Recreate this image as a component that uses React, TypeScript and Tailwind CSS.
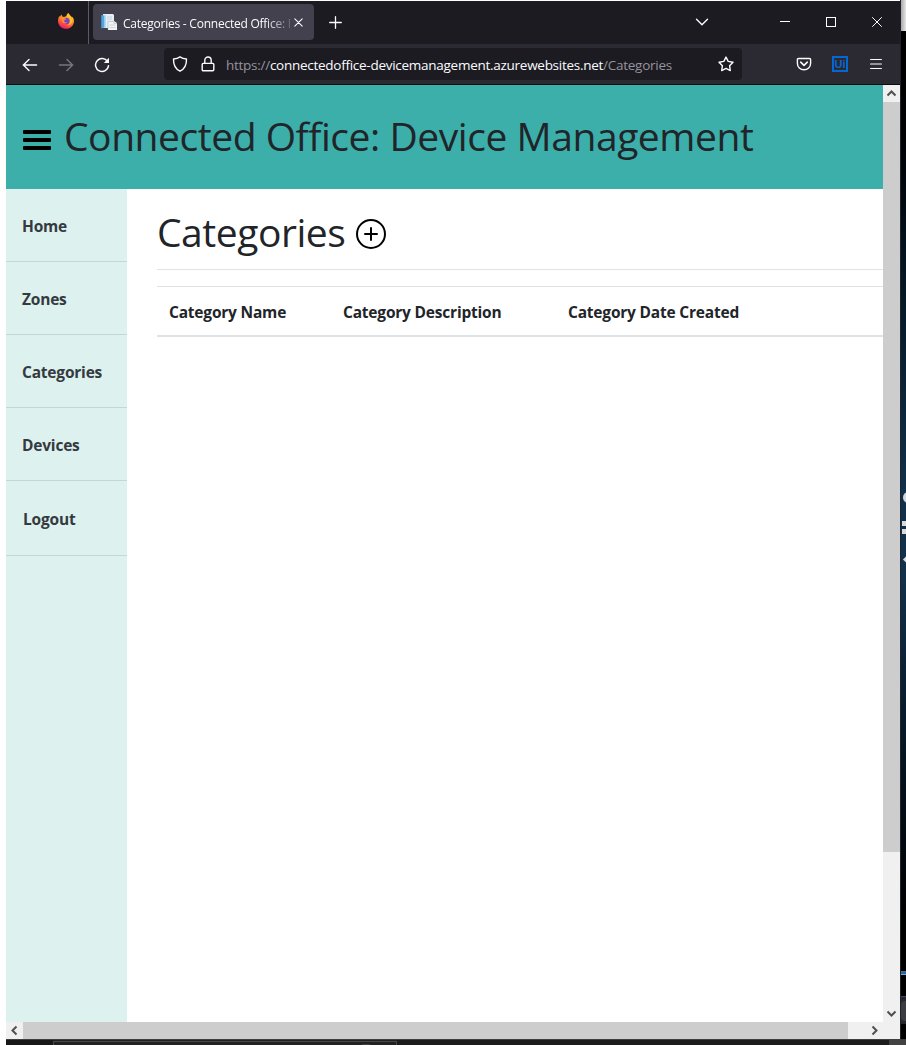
import type { ReactNode } from "react";

const navItems = [
  { label: "Home", box: "h-[73px] pt-[25px] pl-4" },
  { label: "Zones", box: "h-[73px] pt-[25px] pl-4" },
  { label: "Categories", box: "h-[73px] pt-[25px] pl-4" },
  { label: "Devices", box: "h-[73px] pt-[25px] pl-4" },
  { label: "Logout", box: "h-[75px] pt-[26px] pl-[17px]" },
];

function Icon({ className, size, children }: { className?: string; size: number; children: ReactNode }) {
  return (
    <svg
      className={`block shrink-0 ${className ?? ""}`}
      width={size}
      height={size}
      viewBox={`0 0 ${size} ${size}`}
      fill="none"
      stroke="currentColor"
      strokeWidth="1.4"
      strokeLinecap="round"
      strokeLinejoin="round"
    >
      {children}
    </svg>
  );
}

function FirefoxLogo() {
  return (
    <svg className="block" width="16" height="16" viewBox="0 0 16 16">
      <defs>
        <linearGradient id="flame" x1="0.8" y1="0" x2="0.3" y2="1">
          <stop offset="0" stopColor="#ffe226" />
          <stop offset="0.4" stopColor="#ff9a20" />
          <stop offset="0.75" stopColor="#ff4545" />
          <stop offset="1" stopColor="#e8157a" />
        </linearGradient>
      </defs>
      <path
        d="M15.4 5.6C15 4.6 14.2 3.7 13.5 3.3C13.9 4 14 4.7 14 4.8C13.2 2.9 11.4 1.9 10.3 0C9 0.8 8.5 2.2 8.4 3.2C7.5 3.2 6.7 3.6 6.2 4L4.6 3.7C4 3.3 3.8 2.2 3.8 1.6C2.9 2.1 2.4 2.9 2.1 3.4L1.3 3.5L1.2 2.9C0.4 4.5 0 6.3 0 8C0 12.3 3.5 15.8 8 15.8C12.4 15.8 16 12.4 16 8C16 7.2 15.8 6.3 15.4 5.6Z"
        fill="url(#flame)"
      />
      <circle cx="8.2" cy="8" r="3.3" fill="#7a41c8" />
      <path d="M3.8 5L7 5.3L8.3 6.1C7.5 7.1 6.3 7 6 7.9C6.3 9.2 7.5 9.8 9.3 9C8.6 10.8 5.7 10.9 4.4 9.2C3.7 8 3.4 6.3 3.8 5Z" fill="#ff8a2a" />
      <path d="M8.3 3.2C10.8 3.2 12.4 5.4 12.4 7.5C12.4 10 11 11.7 9 12.3C12.8 12.4 14.6 9.6 14 6.8C13.5 4.9 11.8 3.2 10.2 1.2C9.5 2 9.2 2.8 8.3 3.2Z" fill="#ffc42c" />
    </svg>
  );
}

function DocumentsIcon() {
  return (
    <svg className="block shrink-0" width="16" height="16" viewBox="0 0 16 16">
      <path d="M2 0H12L13 1V14H2Z" fill="#e6edf3" />
      <path d="M0.3 1L3.6 1.6V13.4L0.3 14.6Z" fill="#4ba6e2" />
      <path d="M3.6 1.6L5 1V14L3.6 13.4Z" fill="#b5d7ef" />
      <path d="M6 3H11M6 5H11" stroke="#c3d1de" />
      <path d="M7 7H13L16 9V16H7Z" fill="#f1f3f5" />
      <path d="M7 15V7.5H12.5L13 9.5H16" stroke="#a9b6c2" strokeWidth="0.6" fill="none" />
      <path d="M8.5 11H14.5M8.5 13.5H14.5" stroke="#cfd4d8" />
    </svg>
  );
}

function TabBar() {
  return (
    <div className="flex h-[43px] bg-[#1c1b22] text-[#fbfbfe]">
      <div className="flex w-[83px] border-r border-[#5b5b66] pt-3 pl-[52px]">
        <FirefoxLogo />
      </div>
      <div className="mt-[3px] ml-1 flex h-9 w-[221px] items-center rounded bg-[#42414d] pl-2">
        <DocumentsIcon />
        <div className="ml-[6px] w-[167px] overflow-hidden whitespace-nowrap [mask-image:linear-gradient(to_right,black_142px,transparent_174px)]">
          <span className="text-xs leading-5 tracking-[-0.24px]">Categories - Connected Office: Device Management</span>
        </div>
        <Icon size={9} className="ml-1">
          <path strokeWidth="1.1" d="M0.8 0.8L8.2 8.2M8.2 0.8L0.8 8.2" />
        </Icon>
      </div>
      <Icon size={13} className="mt-[15px] ml-[15px]">
        <path strokeWidth="1.3" d="M6.5 0.7V12.3M0.7 6.5H12.3" />
      </Icon>
      <div className="ml-auto flex">
        <Icon size={14} className="mt-[14px] mr-[71px]">
          <path d="M1.5 4.2L7 9.7L12.5 4.2" />
        </Icon>
        <div className="mt-5 mr-9 h-px w-[10px] bg-white" />
        <div className="mt-4 mr-9 size-[10px] border border-white" />
        <Icon size={10} className="mt-4 mr-[18px]">
          <path strokeWidth="1" d="M0.5 0.5L9.5 9.5M9.5 0.5L0.5 9.5" />
        </Icon>
      </div>
    </div>
  );
}

function Toolbar() {
  return (
    <div className="flex h-[41px] items-start border-b border-[#0c0c0d] bg-[#2b2a33] text-[#fbfbfe]">
      <Icon size={16} className="mt-[13px] ml-4">
        <path d="M1.2 8H14.6M7 2.6L1.4 8L7 13.4" />
      </Icon>
      <Icon size={16} className="mt-[13px] ml-5 text-[#77767e]">
        <path d="M14.8 8H1.4M9 2.6L14.6 8L9 13.4" />
      </Icon>
      <Icon size={16} className="mt-[13px] ml-5">
        <path strokeWidth="1.5" d="M13.6 4.6A6.5 6.5 0 1 0 14.5 8.8" />
        <path fill="currentColor" stroke="none" d="M15 0.8V6H9.8Z" />
      </Icon>
      <div className="mt-1 ml-[54px] flex h-8 w-[578px] items-center rounded bg-[#1c1b22] pr-2 pl-2">
        <Icon size={16}>
          <path d="M8 0.9C10 2.4 12.2 2.9 14.5 3C14.7 9 12.5 13 8 15.2C3.5 13 1.3 9 1.5 3C3.8 2.9 6 2.4 8 0.9Z" />
        </Icon>
        <Icon size={16} className="ml-3">
          <rect x="2.2" y="7.4" width="11.6" height="7.4" rx="1" />
          <path d="M4.8 7.2V4.2A3.2 3.2 0 0 1 11.2 4.2V7.2" />
        </Icon>
        <span className="mt-px ml-[10px] text-[13.5px] leading-5 tracking-[-0.27px] whitespace-nowrap text-[#95949c]">
          https://<span className="text-[#fbfbfe]">connectedoffice-devicemanagement.azurewebsites.net</span>/Categories
        </span>
        <Icon size={16} className="ml-auto">
          <path d="M8 1.1L10.2 5.4L15 6.2L11.6 9.7L12.3 14.6L8 12.4L3.7 14.6L4.4 9.7L1 6.2L5.8 5.4Z" />
        </Icon>
      </div>
      <Icon size={16} className="mt-3 ml-[54px]">
        <path d="M2.5 2.5H13.5Q14.6 2.5 14.6 3.6V7.5A6.6 6.3 0 0 1 1.4 7.5V3.6Q1.4 2.5 2.5 2.5Z" />
        <path strokeWidth="1.6" d="M4.7 6.2L8 9.3L11.3 6.2" />
      </Icon>
      <div className="mt-3 ml-5 flex size-4 items-center justify-center border-2 border-[#0567d4] pt-px font-['Liberation_Sans'] text-[11px] leading-none font-bold text-[#0567d4]">
        Ui
      </div>
      <Icon size={12} className="mt-[14px] ml-[22px]">
        <path strokeWidth="1.2" d="M0.6 1.5H11.4M0.6 6H11.4M0.6 10.5H11.4" />
      </Icon>
    </div>
  );
}

function Chevron({ d }: { d: string }) {
  return (
    <svg className="block" width="17" height="17" viewBox="0 0 17 17" fill="none" stroke="#505050" strokeWidth="2">
      <path d={d} />
    </svg>
  );
}

function PageHeader() {
  return (
    <header className="flex h-[104px] bg-[#3cafab]">
      <div className="mt-[45px] ml-[17px] flex w-7 flex-col gap-1">
        <div className="h-1 rounded-[1px] bg-black" />
        <div className="h-1 rounded-[1px] bg-black" />
        <div className="h-1 rounded-[1px] bg-black" />
      </div>
      <h1 className="mt-[27px] ml-[13px] text-[39px] leading-[48px] tracking-[-0.45px] whitespace-nowrap">
        Connected Office: Device Management
      </h1>
    </header>
  );
}

function Sidebar() {
  return (
    <nav className="w-[121px] shrink-0 bg-[#ddf1ef] text-[#343a40]">
      {navItems.map((item) => (
        <div
          key={item.label}
          className={`border-b border-[#c2d7d7] text-[15.5px] leading-[25px] font-bold tracking-[-0.2px] ${item.box}`}
        >
          {item.label}
        </div>
      ))}
    </nav>
  );
}

function CategoriesPanel() {
  return (
    <main className="min-w-0 flex-1 pl-[30px]">
      <div className="flex h-[81px] border-b border-[#e3e3e4]">
        <h2 className="mt-[19px] w-[187px] text-[39px] leading-[48px] tracking-[-0.45px]">Categories</h2>
        <svg className="mt-[29px] ml-[11px] block" width="32" height="32" viewBox="0 0 32 32" fill="none" stroke="#000" strokeWidth="2">
          <circle cx="16" cy="16" r="14" />
          <path strokeLinecap="round" d="M16 10V22M10 16H22" />
        </svg>
      </div>
      <table className="mt-4 w-full table-fixed border-collapse text-left text-[15.5px] leading-6 tracking-[-0.2px]">
        <thead>
          <tr className="h-[49px] border-t border-b-2 border-t-[#dee2e6] border-b-[#dee2e6]">
            <th className="w-[174px] pt-[2px] pl-3">Category Name</th>
            <th className="w-[225px] pt-[2px] pl-3">Category Description</th>
            <th className="pt-[2px] pl-3">Category Date Created</th>
          </tr>
        </thead>
      </table>
    </main>
  );
}

function Viewport() {
  return (
    <div className="flex h-[954px] flex-col bg-white text-[#212529]">
      <div className="flex h-[937px]">
        <div className="flex w-[877px] flex-col">
          <PageHeader />
          <div className="flex flex-1">
            <Sidebar />
            <CategoriesPanel />
          </div>
        </div>
        <div className="flex w-[17px] flex-col bg-[#f0f0f0]">
          <Chevron d="M4.5 10.5L8.5 6.5L12.5 10.5" />
          <div className="h-[750px] bg-[#cdcdcd]" />
          <div className="mt-auto">
            <Chevron d="M4.5 6.5L8.5 10.5L12.5 6.5" />
          </div>
        </div>
      </div>
      <div className="flex h-[17px] bg-[#f0f0f0]">
        <Chevron d="M10.5 4.5L6.5 8.5L10.5 12.5" />
        <div className="w-[825px] bg-[#cdcdcd]" />
        <div className="ml-[18px]">
          <Chevron d="M6.5 4.5L10.5 8.5L6.5 12.5" />
        </div>
      </div>
    </div>
  );
}

function DesktopEdge() {
  return (
    <div className="flex w-[6px] flex-col border-l border-[#20232b] bg-black">
      <div className="h-[31px] bg-gradient-to-r from-[#a8a8a8] to-[#e8e8e8]" />
      <div className="h-[459px] bg-gradient-to-b from-black via-[#04141f] to-[#10304b]" />
      <div className="flex h-[90px] flex-col items-end overflow-hidden bg-[#10304b]">
        <div className="mt-[2px] mr-[-8px] size-[11px] shrink-0 rounded-full bg-[#d5d7da]" />
        <div className="mt-[18px] h-[5px] w-1 bg-[#dadada]" />
        <div className="mt-[3px] h-[5px] w-1 bg-[#dadada]" />
        <div className="mt-[23px] mr-[-3px] size-[5px] shrink-0 rotate-45 bg-[#dadada]" />
      </div>
      <div className="h-[391px] bg-gradient-to-b from-[#10304b] via-[#02070d] via-70% to-black" />
      <div className="h-px bg-[#656b75]" />
      <div className="h-[2px] bg-[#1767b5]" />
      <div className="h-px bg-[#87a7c4]" />
      <div className="mt-[21px] flex h-7 items-center border-t border-[#454560] bg-[#25252c]">
        <div className="h-5 w-full rounded-l bg-[#3b3c40]" />
      </div>
    </div>
  );
}

export default function App() {
  return (
    <div className="flex h-[1045px] w-[906px] flex-col overflow-hidden bg-white font-['Open_Sans','Noto_Sans',sans-serif]">
      <div className="flex h-[1039px] pl-[6px]">
        <div className="flex w-[894px] shrink-0 flex-col pt-px">
          <TabBar />
          <Toolbar />
          <Viewport />
        </div>
        <DesktopEdge />
      </div>
      <div className="ml-[6px] flex h-[6px] border-t border-[#3c403c] bg-[#202020]">
        <div className="w-[47px] bg-[#181818]" />
        <div className="mt-px w-[344px] border-x border-t border-[#484848] bg-[#222222] pl-[306px]">
          <div className="mt-[2px] h-1 w-3 rounded-t-full bg-[#444444]" />
        </div>
        <div className="w-[492px] bg-[#1c1c1c]" />
        <div className="flex-1 bg-[#424242]" />
      </div>
    </div>
  );
}
